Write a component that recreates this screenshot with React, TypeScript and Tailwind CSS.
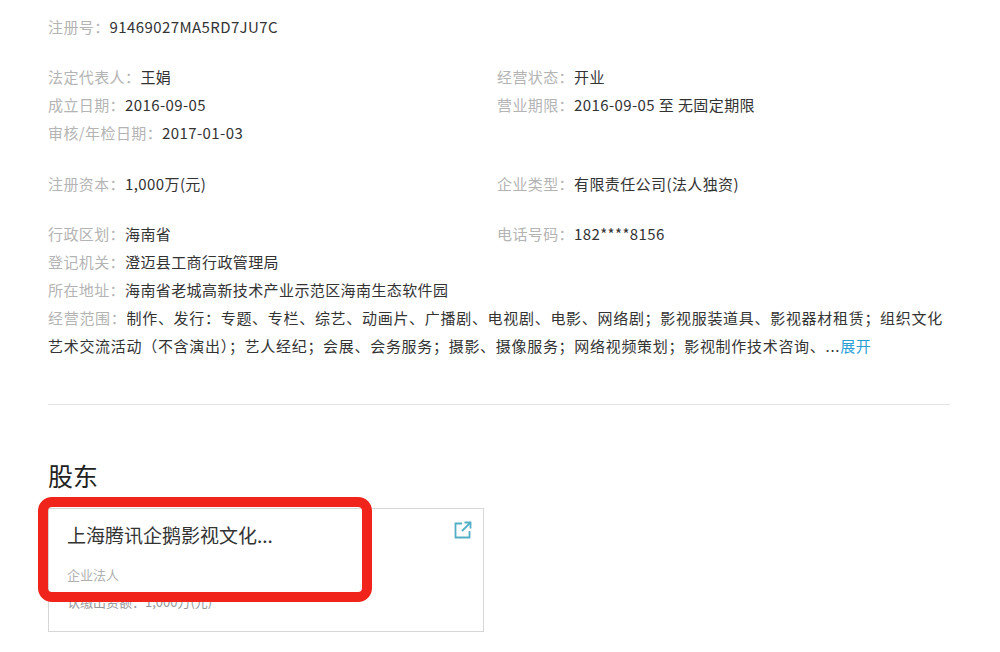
const font = { fontFamily: '"Noto Sans CJK SC", "Noto Sans", sans-serif' }

function Row({ label, value }: { label: string; value: React.ReactNode }) {
  return (
    <div className="h-[28px] leading-[28px] whitespace-nowrap">
      <span className="text-[#b4b4b4]">{label}：</span>
      <span className="text-[#333]">{value}</span>
    </div>
  )
}

function LinkIcon() {
  return (
    <svg width="20" height="20" viewBox="0 0 20 20" fill="none" stroke="#52aec4" strokeWidth="1.8">
      <path d="M9 3.5H2.5v14h14V11" />
      <path d="M11.5 2.5h6v6" />
      <path d="M17.5 2.5 9 11" />
    </svg>
  )
}

export default function App() {
  return (
    <div className="w-[1000px] h-[652px] bg-white overflow-hidden text-[15px] tracking-[0.4px]" style={font}>
      <div className="pl-[48px] pt-[13px]">
        <Row label="注册号" value="91469027MA5RD7JU7C" />

        <div className="grid grid-cols-[449px_1fr] mt-[22px]">
          <div>
            <Row label="法定代表人" value="王娟" />
            <Row label="成立日期" value="2016-09-05" />
            <Row label="审核/年检日期" value="2017-01-03" />
          </div>
          <div>
            <Row label="经营状态" value="开业" />
            <Row label="营业期限" value="2016-09-05 至 无固定期限" />
          </div>
        </div>

        <div className="grid grid-cols-[449px_1fr] mt-[23px]">
          <Row label="注册资本" value="1,000万(元)" />
          <Row label="企业类型" value="有限责任公司(法人独资)" />
        </div>

        <div className="grid grid-cols-[449px_1fr] mt-[22px]">
          <Row label="行政区划" value="海南省" />
          <Row label="电话号码" value="182****8156" />
        </div>
        <Row label="登记机关" value="澄迈县工商行政管理局" />
        <Row label="所在地址" value="海南省老城高新技术产业示范区海南生态软件园" />
        <div className="leading-[28px] w-[910px] tracking-[0.7px]">
          <div className="whitespace-nowrap">
            <span className="text-[#b4b4b4]">经营范围：</span>
            <span className="text-[#333]">制作、发行：专题、专栏、综艺、动画片、广播剧、电视剧、电影、网络剧；影视服装道具、影视器材租赁；组织文化</span>
          </div>
          <div className="whitespace-nowrap text-[#333]">
            艺术交流活动（不含演出）；艺人经纪；会展、会务服务；摄影、摄像服务；网络视频策划；影视制作技术咨询、...
            <span className="text-[#2a9fd6]">展开</span>
          </div>
        </div>

        <div className="mt-[44px] w-[902px] h-px bg-[#e3e3e3]" />

        <div className="mt-[54px] text-[25px] leading-[32px] text-[#222] tracking-normal">股东</div>

        <div className="relative mt-[17px] w-[436px] h-[124px] border border-[#d6d6d6] pl-[18px] pt-[13px] tracking-normal">
          <div className="text-[19px] leading-[26px] text-[#333]">上海腾讯企鹅影视文化...</div>
          <div className="mt-[18px] text-[13px] leading-[18px] text-[#b0b0b0]">企业法人</div>
          <div className="mt-[9px] text-[13px] leading-[18px] text-[#999]">认缴出资额：1,000万(元)</div>
          <div className="absolute right-[10px] top-[11px]">
            <LinkIcon />
          </div>
          <div className="absolute left-[-11px] top-[-12px] w-[334px] h-[105px] border-[10px] border-[#f0241a] rounded-[14px] bg-transparent" />
        </div>
      </div>
    </div>
  )
}
